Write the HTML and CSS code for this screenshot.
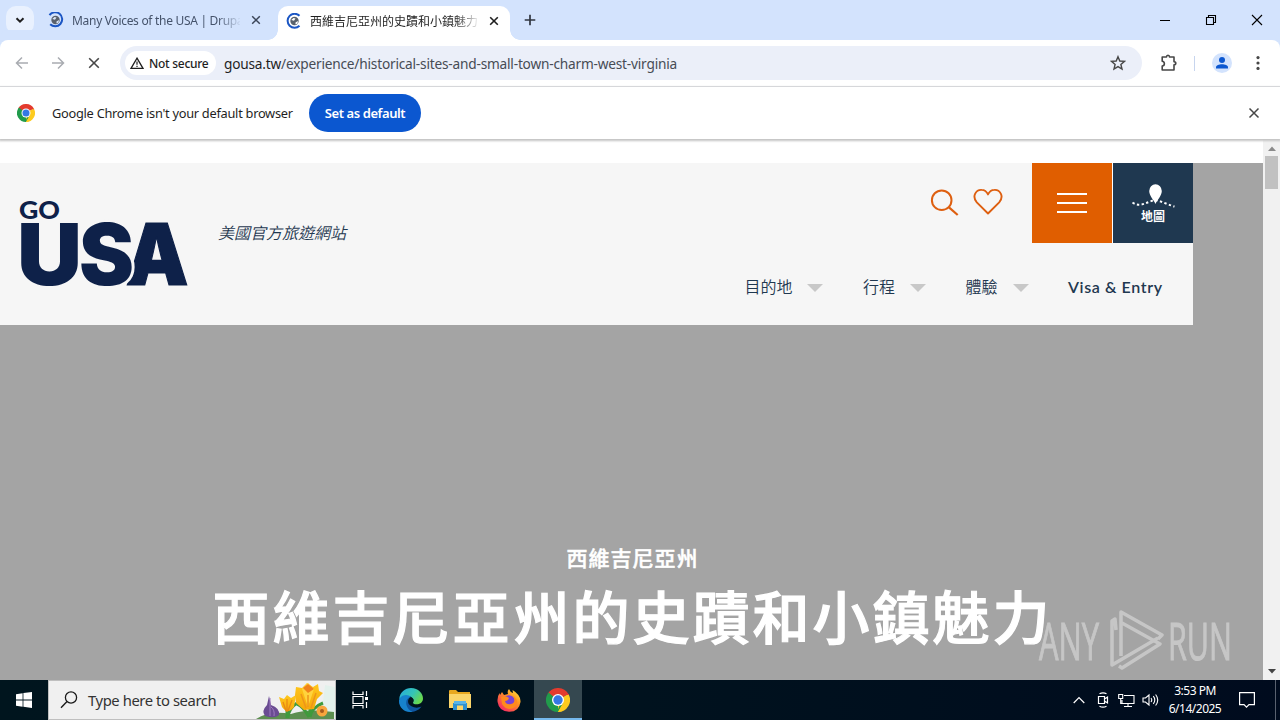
FILE: index.html
```
<!DOCTYPE html>
<html lang="zh-Hant">
<head>
<meta charset="utf-8">
<title>西維吉尼亞州的史蹟和小鎮魅力</title>
<link rel="stylesheet" href="styles.css">
</head>
<body>
<div class="screen">
  <div class="tabstrip">
    <div class="tab-search"><svg width="28" height="28" viewBox="0 0 28 28"><path d="M10.500 12.300l3.500 3.400 3.500-3.400" fill="none" stroke="#1f1f1f" stroke-width="2"/></svg></div>
    <div class="tab tab-idle">
      <svg class="favicon" width="16" height="16" viewBox="0 0 16 16"><path d="M1.500 3.200A7 7 0 1 1 2.200 12.200" fill="none" stroke="#1b56c4" stroke-width="2"/><circle cx="7.500" cy="8" r="4.200" fill="#59616c"/><path d="M4.300 7l2.200-2 2 .6-1.500 2.200zM8.500 9.500l2.500-1.500-.5 2.500-2 .9z" fill="#dce7f8"/></svg>
      <span class="tab-title fade latin">Many Voices of the USA | Drupal</span>
      <svg class="tab-close" width="10" height="10" viewBox="0 0 10 10"><path d="M1.200 1.200l7.600 7.600M8.800 1.200L1.200 8.800" stroke="#3b4558" stroke-width="1.500"/></svg>
    </div>
    <div class="tab tab-active">
      <svg class="favicon" width="16" height="16" viewBox="0 0 16 16"><path d="M13.500 2.800A7 7 0 1 0 13.500 12.800" fill="none" stroke="#1b56c4" stroke-width="2"/><circle cx="8.500" cy="8" r="4.200" fill="#59616c"/><path d="M5.300 7l2.200-2 2 .6L8 7.800zM9.500 9.500L12 8l-.5 2.500-2 .9z" fill="#fff"/></svg>
      <span class="tab-title fade cjk">西維吉尼亞州的史蹟和小鎮魅力</span>
      <svg class="tab-close" width="10" height="10" viewBox="0 0 10 10"><path d="M1.200 1.200l7.600 7.600M8.800 1.200L1.200 8.800" stroke="#1f1f1f" stroke-width="1.600"/></svg>
    </div>
    <svg class="new-tab" width="12" height="12" viewBox="0 0 12 12"><path d="M6 .7v10.600M.7 6h10.600" stroke="#303640" stroke-width="1.700"/></svg>
    <div class="window-buttons">
      <svg width="12" height="12" viewBox="0 0 12 12"><path d="M1 6.500h10" stroke="#000"/></svg>
      <svg width="12" height="12" viewBox="0 0 12 12"><path d="M1.500 3.500h7v7h-7zM3.500 3.500v-2h7v7h-2" fill="none" stroke="#000" stroke-width="1.100"/></svg>
      <svg width="12" height="12" viewBox="0 0 12 12"><path d="M1 1l10 10M11 1L1 11" stroke="#000" stroke-width="1.100"/></svg>
    </div>
  </div>

  <div class="toolbar">
    <div class="nav-buttons">
      <svg width="14" height="14" viewBox="0 0 14 14"><path d="M13 7H2M7 1.500L1.500 7 7 12.500" fill="none" stroke="#a9acb1" stroke-width="1.500"/></svg>
      <svg width="14" height="14" viewBox="0 0 14 14"><path d="M1 7h11M7 1.500L12.500 7 7 12.500" fill="none" stroke="#a9acb1" stroke-width="1.500"/></svg>
      <svg width="14" height="14" viewBox="0 0 14 14"><path d="M2.200 2.200l9.600 9.600M11.800 2.200l-9.600 9.600" stroke="#474747" stroke-width="1.600"/></svg>
    </div>
    <div class="omnibox">
      <div class="chip">
        <svg width="14" height="12" viewBox="0 0 14 12"><path d="M7 1.200L13 11.300H1z" fill="none" stroke="#1f1f1f" stroke-width="1.300"/><path d="M7 4.500v3.200M7 8.700v1.300" stroke="#1f1f1f" stroke-width="1.200"/></svg>
        <span class="chip-label">Not secure</span>
      </div>
      <span class="url"><b>gousa.tw</b>/experience/historical-sites-and-small-town-charm-west-virginia</span>
      <svg class="star" width="16" height="16" viewBox="0 0 16 16"><path d="M8 1.700l1.800 4.300 4.700.4-3.600 3.100 1.100 4.600L8 11.600l-4 2.500 1.100-4.600L1.500 6.400l4.700-.4z" fill="none" stroke="#474747" stroke-width="1.400"/></svg>
    </div>
    <svg class="extensions" width="18" height="18" viewBox="0 0 18 18"><path d="M2.200 3h4.300c0-2.300 3-2.300 3 0H14v4.700c2.400 0 2.400 3.200 0 3.200V16H2.200v-4c2.900-.3 2.900-4.400 0-4.700z" fill="none" stroke="#474747" stroke-width="1.600" stroke-linejoin="round"/></svg>
    <span class="divider"></span>
    <svg class="profile" width="20" height="20" viewBox="0 0 20 20"><circle cx="10" cy="10" r="10" fill="#d3e3fd"/><circle cx="10" cy="6.900" r="3" fill="#0b57d0"/><path d="M4 15.500v-1.200c0-4 12-4 12 0v1.200z" fill="#0b57d0"/></svg>
    <svg class="kebab" width="4" height="16" viewBox="0 0 4 16"><g fill="#474747"><circle cx="2" cy="2.600" r="1.600"/><circle cx="2" cy="8" r="1.600"/><circle cx="2" cy="13.400" r="1.600"/></g></svg>
  </div>

  <div class="infobar">
    <svg width="18" height="18" viewBox="0 0 24 24"><use href="#chrome"/></svg>
    <span class="info-text">Google Chrome isn't your default browser</span>
    <span class="default-button">Set as default</span>
    <svg class="info-close" width="12" height="12" viewBox="0 0 12 12"><path d="M1.500 1.500l9 9M10.500 1.500l-9 9" stroke="#474747" stroke-width="1.500"/></svg>
  </div>

  <div class="viewport">
    <div class="page">
      <div class="page-header">
        <svg class="logo" width="170" height="90" viewBox="0 0 170 90">
          <text class="logo-go" x="-1" y="18.500" textLength="41" lengthAdjust="spacingAndGlyphs">GO</text>
          <text class="logo-usa" x="-3" y="85" textLength="65" lengthAdjust="spacingAndGlyphs">U</text>
          <text class="logo-usa logo-a" x="105.500" y="85" textLength="63" lengthAdjust="spacingAndGlyphs">A</text>
          <text class="logo-usa logo-cut" x="59" y="85" textLength="55" lengthAdjust="spacingAndGlyphs">S</text>
        </svg>
        <span class="tagline">美國官方旅遊網站</span>
        <div class="header-right">
          <div class="actions">
            <svg class="search" width="30" height="28" viewBox="0 0 30 28"><circle cx="11.700" cy="11.200" r="9.800" fill="none" stroke="#de5f10" stroke-width="2"/><path d="M18.700 18.200l9 7.800" stroke="#de5f10" stroke-width="2.200"/></svg>
            <svg class="heart" width="30" height="28" viewBox="0 0 30 28"><path d="M15 25.500L3.800 14.300C-1.500 8 3.200 1.500 8.700 1.900c3.300.1 5.100 2.100 6.300 4.500 1.200-2.400 3-4.400 6.300-4.500 5.500-.4 10.200 6.100 4.900 12.400z" fill="none" stroke="#de5f10" stroke-width="1.900" stroke-linejoin="round"/></svg>
            <div class="menu-button"><i></i><i></i><i></i></div>
            <div class="map-button">
              <svg width="46" height="26" viewBox="0 0 46 26"><path d="M2.500 19.500c8 5.500 14-.5 22-2.500 6 .5 11 4 20 6.500" fill="none" stroke="#fff" stroke-width="2" stroke-dasharray="2.400 2.400"/><path d="M25.500 21c-1.500-4-6.300-8-6.300-13a6.300 6.800 0 0 1 12.600 0c0 5-4.800 9-6.300 13z" fill="#fff"/></svg>
              <span>地圖</span>
            </div>
          </div>
          <div class="menu">
            <span class="menu-item">目的地</span><i class="caret"></i>
            <span class="menu-item">行程</span><i class="caret"></i>
            <span class="menu-item">體驗</span><i class="caret"></i>
            <span class="visa">Visa &amp; Entry</span>
          </div>
        </div>
      </div>
      <div class="hero">
        <div class="hero-sub">西維吉尼亞州</div>
        <div class="hero-title">西維吉尼亞州的史蹟和小鎮魅力</div>
      </div>
      <svg class="watermark" width="196" height="68" viewBox="0 0 196 68">
        <g class="wm-text">
          <text x="1" y="54" textLength="60" lengthAdjust="spacingAndGlyphs">ANY</text>
          <text x="130" y="54" textLength="64" lengthAdjust="spacingAndGlyphs">RUN</text>
        </g>
        <g fill="none" stroke="#d2d2d2" stroke-width="3.500" stroke-linejoin="round" opacity=".75"><path d="M78 24l-1-11-3 2v44l46-27"/><path d="M83 50V6l41 23-4 4M84 17l38 21-38 24-3-2"/></g>
      </svg>
    </div>
    <div class="scrollbar">
      <svg width="17" height="14" viewBox="0 0 17 14"><path d="M5 9l4-4.500L13 9z" fill="#8a8a8a"/></svg>
      <i class="thumb"></i>
      <svg class="down" width="17" height="17" viewBox="0 0 17 17"><path d="M5 6h8l-4 4.500z" fill="#444"/></svg>
    </div>
  </div>

  <div class="taskbar">
    <div class="start"><svg width="16" height="16" viewBox="0 0 16 16"><path d="M0 2.200l6.600-1v6.300H0zM7.400 1.100L16 0v7.500H7.400zM0 8.400h6.600v6.300L0 13.800zM7.400 8.400H16V16l-8.600-1.200z" fill="#fff"/></svg></div>
    <div class="searchbox">
      <svg width="18" height="18" viewBox="0 0 18 18"><circle cx="11" cy="6.500" r="5.600" fill="none" stroke="#1a1a1a" stroke-width="1.300"/><path d="M7 10.500L1 16.800" stroke="#1a1a1a" stroke-width="1.400"/></svg>
      <span class="search-text">Type here to search</span>
      <svg class="flowers" width="80" height="38" viewBox="0 0 80 38">
        <defs><linearGradient id="petal" x2="0" y2="1"><stop stop-color="#ffc81c"/><stop offset="1" stop-color="#f5a80c"/></linearGradient></defs>
        <path d="M46 38l6-14 6 8 10-12 2-16 10 2v32z" fill="#e3f1ec"/>
        <path d="M1 38q14-9 35-5 16-6 43-2v7z" fill="#5d8f50"/>
        <path d="M32 37V22M55 36V18M55 36q1-9 13-14M33 37q0-9 9-15M54 36Q48 25 42 23" fill="none" stroke="#3f9a3c" stroke-width="3"/>
        <path d="M14 15l2 9q9 3 8 10-4 4-14 1-4-5 2-11z" fill="#6a4c92"/><path d="M15 17v18M16 26q4 3 3 9" stroke="#9d7bc0" fill="none"/>
        <path d="M24 16l5 2 3-4 4 3 5-3-2 12q-6 8-12 0z" fill="url(#petal)"/><path d="M32 18v13M28 21l3 9M37 19l-4 11" stroke="#e98a13" fill="none" stroke-width="1.300"/>
        <path d="M41 6l6 1 5-5 6 4 5-3 1 7 4 2-6 6-3 10-10 1-8-7-1-8z" fill="url(#petal)"/><path d="M47 8l6 18 6-18-6-6z" fill="#ffd33d"/><path d="M48 7l5-4 6 5-6 4z" fill="#f0821b"/><path d="M46 13l5 14M61 12l-5 15M53 14v12" stroke="#ed951b" fill="none" stroke-width="1.500"/>
        <circle cx="67" cy="30" r="5.500" fill="#f9a53d"/><circle cx="67" cy="30" r="2" fill="#a85a1c"/>
      </svg>
    </div>
    <div class="apps">
      <div class="app app-view"><svg width="18" height="18" viewBox="0 0 18 18"><path d="M2 .5v3h10v-3M2 17.500v-3h10v3M2 5.500h10v7H2zM15.500 0v5M15.500 11v6" fill="none" stroke="#fff" stroke-width="1.200"/><path d="M14 6h3v3h-3z" fill="#fff"/></svg></div>
      <div class="app"><svg width="24" height="24" viewBox="0 0 24 24"><defs><linearGradient id="edge1" x2="1" y2=".5"><stop stop-color="#25a8e0"/><stop offset=".6" stop-color="#35c5b5"/><stop offset="1" stop-color="#68d850"/></linearGradient></defs><path d="M0 12A12 12 0 0 0 16 23.300c3-.9 5.500-3 6.500-5-3 2-7 1.800-10 0-4-2-4.500-6-1.500-9z" fill="#0f559f"/><path d="M.2 11C1 4 6 0 12 0c7.500 0 12 5.500 12 10.500 0 5-5 6.500-9 5.500-2-.6-.5-1.500-.5-3.500 0-3-3.500-5-7-4.500C4 8.300 1.500 10 .2 11z" fill="url(#edge1)"/><path d="M0 13c0-3 3-6 7-6 2 0 4 .7 5 2-4 .5-5.500 4-4.500 8 .8 3.300 3 5.700 6 6.800C6 25 0 20 0 13z" fill="#1782cd"/><path d="M11.500 10.500c2-1.200 3.500.7 3 2.500-.5 1.500-1 2.300.5 3-3 .5-5-2.500-3.500-5.500z" fill="#04161f"/></svg></div>
      <div class="app"><svg width="22" height="20" viewBox="0 0 22 20"><path d="M0 1q0-1 1-1h6l2 2h12v5H0z" fill="#e8a820"/><path d="M0 4h22v14H0z" fill="#fbd56a"/><path d="M4 13h14v7H4z" fill="#2f91d0"/><path d="M8 15.500h6V20H8z" fill="#fbd56a"/><path d="M5 11h12v3H5z" fill="#58b4e8"/></svg></div>
      <div class="app"><svg width="24" height="24" viewBox="0 0 24 24"><defs><linearGradient id="fox" x1="1" x2=".2" y2="1"><stop stop-color="#fff04d"/><stop offset=".4" stop-color="#ff9a21"/><stop offset="1" stop-color="#f52367"/></linearGradient></defs><path d="M2.500 5L3 7l2-3 2 3 4-1q-1-3 1-5 1 3 4 4l-.5-3Q24 7 23.500 14 22 24 12 23.800 2 23.500.6 14 0 9 2.500 5z" fill="url(#fox)"/><circle cx="12" cy="12.800" r="5.600" fill="#7b43d4"/><path d="M4 9q5-2 8 1-1 3-4 3 1 4 6 3 6-2 2-8 7 5 2 11-8 5-13-3z" fill="#ff8a1d"/></svg></div>
      <div class="app app-current"><svg width="24" height="24" viewBox="0 0 24 24"><g id="chrome"><path d="M12 12L1.600 6A12 12 0 0 1 22.400 6z" fill="#e33b2e"/><path d="M12 12L22.400 6A12 12 0 0 1 12 24z" fill="#fdcb1f"/><path d="M12 12v12A12 12 0 0 1 1.600 6z" fill="#219b4b"/><path d="M12 6h10.400a12 12 0 0 1 .5 1H12z" fill="#e33b2e"/><path d="M6.800 15L1.600 6l1-1.400L9 10zM17.200 15L12 24l-1-.1L14 16z" fill="#219b4b"/><path d="M17.200 15L12 24l4-1L20 12z" fill="#fdcb1f"/><circle cx="12" cy="12" r="6" fill="#fff"/><circle cx="12" cy="12" r="4.700" fill="#3578e5"/></g></svg></div>
    </div>
    <div class="tray">
      <svg width="12" height="8" viewBox="0 0 12 8"><path d="M.7 7L6 1.500 11.300 7" fill="none" stroke="#fff" stroke-width="1.200"/></svg>
      <svg class="meet" width="12" height="16" viewBox="0 0 12 16"><path d="M1.500 4.500h6v7h-6zM7.500 7l3-2v6l-3-2M2.500 1.800q3.500-2 7 0M2.500 14.200q3.500 2 7 0" fill="none" stroke="#fff" stroke-width="1.200"/></svg>
      <svg class="net" width="17" height="15" viewBox="0 0 17 15"><path d="M6 2.500h10v8H4V7M10 10.500v3M6 13.500h8M.7 1.500h4v4h-4zM2.700 5.500v5H4" fill="none" stroke="#fff" stroke-width="1.100"/></svg>
      <svg class="sound" width="17" height="14" viewBox="0 0 17 14"><path d="M1 5h2.500L7 2v10L3.500 9H1zM9 5q1.500 2 0 4M11.300 3.200q3 3.800 0 7.600M13.600 1.500q4.300 5.500 0 11" fill="none" stroke="#fff" stroke-width="1.100"/></svg>
      <div class="clock"><span class="time">3:53 PM</span><span class="date">6/14/2025</span></div>
      <svg class="notice" width="16" height="16" viewBox="0 0 16 16"><path d="M.6.600h14.800v12H10l-2.500 2.500-2.500-2.500H.6z" fill="none" stroke="#fff" stroke-width="1.200"/></svg>
      <i class="show-desktop"></i>
    </div>
  </div>
</div>
</body>
</html>
```
FILE: styles.css
```
* { box-sizing: border-box; }
body { margin: 0; }
svg { display: block; flex: none; }
.screen {
  width: 1280px; height: 720px; overflow: hidden;
  display: flex; flex-direction: column;
  font-family: "Noto Sans", "Open Sans", "Noto Sans CJK TC", sans-serif;
  font-size: 12px; color: #1f1f1f; white-space: nowrap;
}

/* Browser tabs */
.tabstrip { flex: none; height: 40px; background: #d3e3fd; display: flex; align-items: flex-start; padding-left: 6px; }
.tab-search { width: 28px; height: 28px; margin-top: 6px; border-radius: 10px; background: #e9f1fe; }
.tab { display: flex; align-items: center; height: 28px; margin-top: 6px; }
.tab-idle { width: 244px; padding-left: 14px; color: #45536b; }
.tab-active {
  position: relative; z-index: 1; width: 232px; height: 34px; padding: 0 0 5px 8px;
  background: #fff; border-radius: 10px 10px 0 0;
}
.tab-active::before, .tab-active::after {
  content: ""; position: absolute; bottom: 0; width: 10px; height: 10px;
}
.tab-active::before { left: -10px; background: radial-gradient(circle at 0 0, transparent 9.500px, #fff 10px); }
.tab-active::after { right: -10px; background: radial-gradient(circle at 100% 0, transparent 9.500px, #fff 10px); }
.tab-title { width: 168px; margin-left: 8px; overflow: hidden; line-height: 18px; }
.latin { letter-spacing: -.3px; padding-top: 1px; }
.cjk { font-family: "Noto Sans CJK TC", sans-serif; font-weight: 400; }
.fade { -webkit-mask-image: linear-gradient(90deg, #000 145px, transparent 170px); mask-image: linear-gradient(90deg, #000 145px, transparent 170px); }
.tab-close { margin-left: 11px; }
.new-tab { margin: 14px 0 0 14px; }
.window-buttons { display: flex; gap: 34px; margin: 14px 17px 0 auto; }

/* Address bar */
.toolbar {
  flex: none; height: 47px; background: #fff; border-bottom: 1px solid #dfe1e5;
  display: flex; align-items: center; padding: 0 20px 0 15px;
  border-radius: 8px 8px 0 0; box-shadow: 0 -10px 0 #d3e3fd;
}
.nav-buttons { display: flex; gap: 22px; }
.omnibox { display: flex; align-items: center; width: 1022px; height: 34px; margin-left: 19px; border-radius: 17px; background: #ebeff9; padding: 0 16px 0 5px; }
.chip { display: flex; align-items: center; gap: 5px; width: 91px; height: 24px; padding-left: 5px; border-radius: 12px; background: #fff; }
.chip-label { font-weight: 500; letter-spacing: -.28px; }
.url { margin-left: 8px; font-size: 13.700px; letter-spacing: -.21px; color: #474c55; }
.url b { font-weight: 400; color: #1f1f1f; }
.star { margin-left: auto; }
.extensions { margin-left: 18px; }
.divider { width: 1px; height: 15px; margin: 0 17px 0 16px; background: #c7d5ee; }
.kebab { margin-left: auto; }

/* Default browser notice */
.infobar { flex: none; position: relative; z-index: 1; height: 52px; background: #fff; display: flex; align-items: center; padding: 0 20px 0 17px; box-shadow: 0 1px 2px 1px #c4c4c4; }
.info-text { width: 241px; margin-left: 17px; font-size: 12.800px; letter-spacing: -.27px; }
.default-button { display: flex; align-items: center; justify-content: center; width: 112px; height: 38px; margin-left: 16px; border-radius: 19px; background: #0b57d0; color: #fff; font-weight: 600; font-size: 13px; letter-spacing: -.42px; }
.info-close { margin-left: auto; }

/* Page */
.viewport { flex: 1; min-height: 0; display: flex; background: #fff; }
.page { position: relative; width: 1263px; margin-top: 24px; background: #a4a4a4; display: flex; flex-direction: column; }
.page-header { width: 1193px; height: 162px; background: #f6f6f6; display: flex; color: #1f3850; }
.logo { margin: 37px 0 0 20px; overflow: visible; }
.logo text { fill: #0e2149; }
.logo .logo-go { font: 900 24px Lato, sans-serif; }
.logo .logo-usa { font: 900 85px Inter, sans-serif; }
.logo .logo-a { stroke: #0e2149; stroke-width: 1.200px; }
.logo .logo-cut { stroke: #f6f6f6; stroke-width: 6px; paint-order: stroke; }
.tagline { margin: 57px 0 0 28px; font: italic 350 16px/24px "Noto Sans CJK TC", sans-serif; }
.header-right { flex: 1; display: flex; flex-direction: column; }
.actions { display: flex; justify-content: flex-end; }
.search { margin: 26px 13px 0 0; }
.heart { margin: 25px 29px 0 0; }
.menu-button { width: 80px; height: 80px; background: #e05e00; display: flex; flex-direction: column; align-items: center; justify-content: center; gap: 7px; margin-right: 1px; box-shadow: 1px 0 0 #fff; }
.menu-button i { width: 30px; height: 2px; background: #fff; }
.map-button { width: 80px; height: 80px; background: #1f3850; color: #fff; padding-top: 20px; display: flex; flex-direction: column; align-items: center; }
.map-button span { font: 700 12px/16px "Noto Sans CJK TC", sans-serif; margin-top: -1px; }
.menu { display: flex; align-items: center; justify-content: flex-end; height: 24px; margin: 31px 30px 0 0; }
.menu-item { font: 350 16px/24px "Noto Sans CJK TC", sans-serif; }
.caret { width: 0; height: 0; border: 8px solid transparent; border-top: 8px solid #c8c8c8; border-bottom: 0; margin: 4px 39.500px 0 15px; }
.visa { width: 95px; font: 600 16px/24px Lato, sans-serif; letter-spacing: .6px; margin-top: 1px; }
.hero { margin-top: 217px; padding-left: 2px; text-align: center; color: #fff; font-family: "Noto Sans CJK TC", sans-serif; font-weight: 500; }
.hero-sub { font-size: 21px; line-height: 30px; letter-spacing: 1px; -webkit-text-stroke: .5px #fff; }
.hero-title { font-size: 57px; line-height: 80px; letter-spacing: 3px; margin-top: 2px; -webkit-text-stroke: 1.200px #fff; }
.watermark { position: absolute; right: 29px; bottom: 6px; overflow: visible; }
.wm-text text { font: 400 51px "Open Sans", sans-serif; fill: #d2d2d2; stroke: #d2d2d2; stroke-width: 1px; opacity: .75; }
.scrollbar { width: 17px; background: #f1f1f1; display: flex; flex-direction: column; align-items: center; padding-top: 3px; }
.thumb { width: 13px; height: 33px; background: #c1c1c1; }
.down { margin-top: auto; }

/* Taskbar */
.taskbar { flex: none; height: 40px; background: linear-gradient(90deg, #00151e, #00121e 50%, #000b1e); display: flex; color: #fff; }
.start { width: 48px; display: flex; align-items: center; justify-content: center; }
.searchbox { width: 288px; background: #f0f0f0; border: 1px solid #bfbfbf; display: flex; align-items: center; padding-left: 11px; }
.search-text { margin-left: 10px; font-size: 14.800px; letter-spacing: -.42px; color: #333; }
.flowers { margin-left: auto; }
.apps { display: flex; }
.app { width: 49px; display: flex; align-items: center; justify-content: center; }
.app-view { width: 47px; margin-right: 3px; }
.app-current { width: 48px; background: #354850; border-bottom: 2px solid #76b9ed; padding-top: 2px; margin-left: 1px; }
.tray { margin-left: auto; display: flex; align-items: center; }
.meet { margin-left: 12px; }
.net { margin-left: 9px; }
.sound { margin-left: 7px; }
.clock { width: 70px; margin-left: 1px; display: flex; flex-direction: column; align-items: center; line-height: 18px; }
.time, .date { letter-spacing: -.5px; }
.notice { margin-left: 9px; }
.show-desktop { width: 1px; height: 40px; margin: 0 4px 0 20px; background: #59616f; }
```
